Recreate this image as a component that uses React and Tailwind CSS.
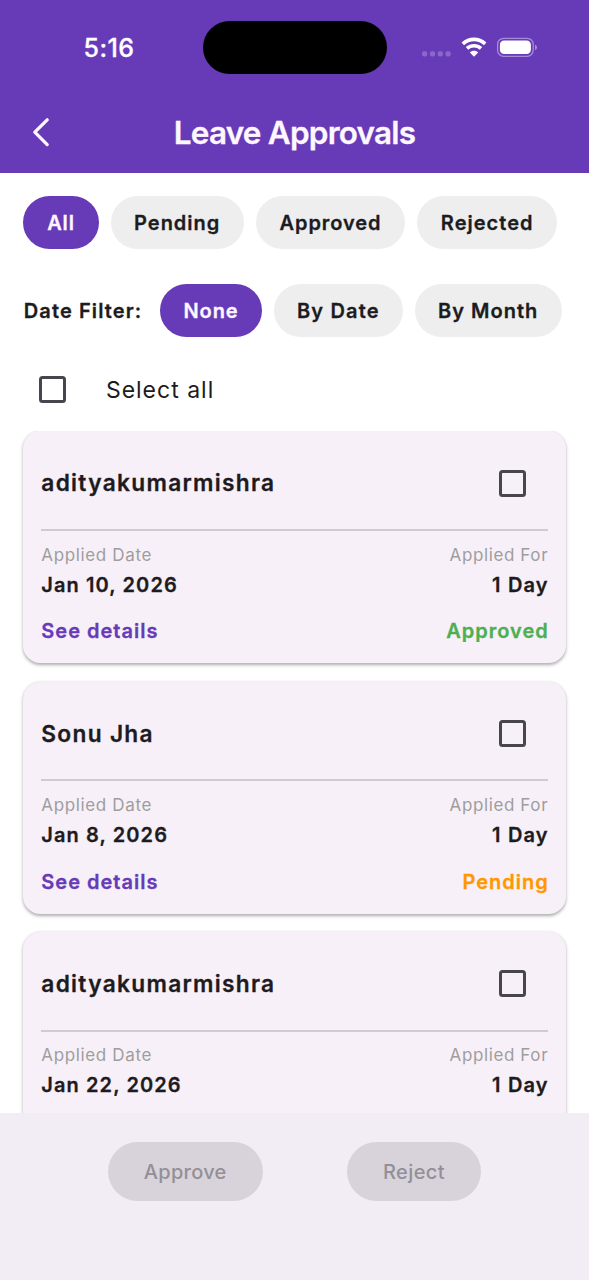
const STATUS_FILTERS = [
  { label: "All", className: "w-[75.5px] bg-[#673ab7] text-[#fef7ff] tracking-[0.86px]" },
  { label: "Pending", className: "w-[133px] bg-[#eeeeee] text-[#1c1b1f] tracking-[1px]" },
  { label: "Approved", className: "w-[149.5px] bg-[#eeeeee] text-[#1c1b1f] tracking-[0.9px]" },
  { label: "Rejected", className: "w-[140px] bg-[#eeeeee] text-[#1c1b1f] tracking-[1.03px]" },
];

const DATE_FILTERS = [
  { label: "None", className: "w-[102px] bg-[#673ab7] text-[#fef7ff] tracking-[0.87px]" },
  { label: "By Date", className: "w-[128.7px] bg-[#eeeeee] text-[#1c1b1f] tracking-[1.15px]" },
  { label: "By Month", className: "w-[147px] bg-[#eeeeee] text-[#1c1b1f] tracking-[1.02px]" },
];

const LEAVES = [
  { name: "adityakumarmishra", date: "Jan 10, 2026", duration: "1 Day", status: "Approved", statusClass: "text-[#4caf50]" },
  { name: "Sonu Jha", date: "Jan 8, 2026", duration: "1 Day", status: "Pending", statusClass: "text-[#ff9800]" },
  { name: "adityakumarmishra", date: "Jan 22, 2026", duration: "1 Day" },
];

function StatusBar() {
  return (
    <div className="flex h-[94.6px] items-center">
      <div className="w-[202.5px] pt-px pl-[83.5px] text-[25px] font-medium leading-[30px] tracking-[0.46px] text-white [-webkit-text-stroke:0.3px]">
        5:16
      </div>
      <div className="h-[53.6px] w-[184px] rounded-full bg-black" />
      <svg className="ml-[34.4px] h-[24px] w-[120px]" viewBox="0 0 120 24" fill="none">
        <g fill="#8b67cb">
          <rect x="1" y="16.2" width="5.2" height="5.2" rx="1.8" />
          <rect x="8.9" y="16.2" width="5.2" height="5.2" rx="1.8" />
          <rect x="16.7" y="16.2" width="5.2" height="5.2" rx="1.8" />
          <rect x="24.5" y="16.2" width="5.2" height="5.2" rx="1.8" />
        </g>
        <g stroke="#fff" strokeWidth="3.6">
          <path d="M41.8 8.9C48.2 2.9 57.8 2.9 64.2 8.9" />
          <path d="M46 13.4C49.9 9.9 56.1 9.9 60 13.4" />
        </g>
        <path d="M48.8 17.4C51 15.2 55 15.2 57.2 17.4L53 21.8Z" fill="#fff" />
        <rect x="76.6" y="3.3" width="35.6" height="18" rx="6" stroke="#a68bd6" strokeWidth="1.3" />
        <rect x="78.9" y="5.5" width="31" height="13.6" rx="4.2" fill="#fff" />
        <path d="M114 9.7C115.6 10.3 116 11.3 116 12.4C116 13.5 115.6 14.5 114 15.1Z" fill="#a68bd6" />
      </svg>
    </div>
  );
}

function Header() {
  return (
    <header className="h-[172.6px] shrink-0 bg-[#673ab7]">
      <StatusBar />
      <div className="grid h-[76px] grid-cols-[80px_1fr_80px] items-center">
        <svg className="ml-[30px] h-[32px] w-[22px]" viewBox="0 0 22 32" fill="none" stroke="#fef7ff" strokeWidth="3.3" strokeLinecap="round" strokeLinejoin="round">
          <path d="M17.2 2.8L4.8 15.2L17.2 27.6" />
        </svg>
        <h1 className="pt-px text-center text-[31.5px] font-semibold leading-[40px] tracking-[-0.79px] text-[#fef7ff] [-webkit-text-stroke:0.3px]">
          Leave Approvals
        </h1>
      </div>
    </header>
  );
}

function Chip({ label, className }) {
  return (
    <button className={`flex h-[52.8px] shrink-0 items-center justify-center rounded-full text-[20px] font-semibold leading-none [-webkit-text-stroke:0.3px] ${className}`}>
      {label}
    </button>
  );
}

function Checkbox() {
  return <span className="block h-[27px] w-[27px] shrink-0 rounded-[3.5px] border-3 border-[#49454f]" />;
}

function LeaveCard({ leave }) {
  return (
    <article className="h-[232px] shrink-0 rounded-[17.5px] bg-[#f7f0f8] px-[18.3px] shadow-[0_1.5px_3px_rgba(0,0,0,0.24),0_1.5px_4px_rgba(0,0,0,0.1)]">
      <div className="flex h-[97.5px] items-center justify-between pt-[6px] pr-[21.5px]">
        <h2 className="text-[22.7px] font-semibold leading-[30px] tracking-[1.31px] text-[#1d1b20] [-webkit-text-stroke:0.3px]">{leave.name}</h2>
        <Checkbox />
      </div>
      <div className="h-[2px] bg-[#d0cad6]" />
      <div className="flex h-[47.5px] items-center justify-between text-[17px] leading-[24px] text-[#9e9e9e]">
        <span className="tracking-[0.64px]">Applied Date</span>
        <span className="-mr-[0.5px] tracking-[0.62px]">Applied For</span>
      </div>
      <div className="-mt-[7.8px] flex h-[28px] items-center justify-between text-[20px] font-semibold leading-[28px] text-[#1d1b20] [-webkit-text-stroke:0.3px]">
        <span className="tracking-[1.1px]">{leave.date}</span>
        <span className="-mr-[1px] tracking-[1.15px]">{leave.duration}</span>
      </div>
      {leave.status && (
        <div className="mt-[18.6px] flex h-[28px] items-center justify-between text-[20px] font-semibold leading-[28px] tracking-[1px] [-webkit-text-stroke:0.3px]">
          <span className="text-[#673ab7]">See details</span>
          <span className={`-mr-[1px] ${leave.statusClass}`}>{leave.status}</span>
        </div>
      )}
    </article>
  );
}

export default function App() {
  return (
    <div className="flex h-[1280px] w-[589px] flex-col overflow-hidden bg-white font-['Inter',sans-serif]">
      <Header />
      <div className="flex shrink-0 gap-[12px] pt-[23.6px] pl-[23.2px]">
        {STATUS_FILTERS.map((f) => (
          <Chip key={f.label} {...f} />
        ))}
      </div>
      <div className="mt-[35.2px] flex shrink-0 items-center pl-[23.8px]">
        <span className="w-[136.2px] text-[20px] font-semibold leading-none tracking-[1.1px] whitespace-nowrap text-[#1d1b20] [-webkit-text-stroke:0.3px]">
          Date Filter:
        </span>
        <div className="flex gap-[12px]">
          {DATE_FILTERS.map((f) => (
            <Chip key={f.label} {...f} />
          ))}
        </div>
      </div>
      <div className="flex h-[94px] shrink-0 items-center gap-[39.7px] pt-[12px] pl-[39.2px]">
        <Checkbox />
        <span className="pt-px text-[23px] leading-[30px] tracking-[1px] text-[#1d1b20]">Select all</span>
      </div>
      <main className="flex min-h-0 flex-1 flex-col gap-[18.4px] overflow-hidden px-[23px] pt-[0.4px]">
        {LEAVES.map((leave, i) => (
          <LeaveCard key={i} leave={leave} />
        ))}
      </main>
      <footer className="flex h-[167px] shrink-0 gap-[84.5px] bg-[#f2ecf4] pt-[29px] pl-[108px] text-[20px] font-medium text-[#938f96]">
        <button className="h-[59px] w-[154.5px] rounded-full bg-[#d8d3da] tracking-[0.29px]">Approve</button>
        <button className="h-[59px] w-[134px] rounded-full bg-[#d8d3da] tracking-[0.39px]">Reject</button>
      </footer>
    </div>
  );
}
